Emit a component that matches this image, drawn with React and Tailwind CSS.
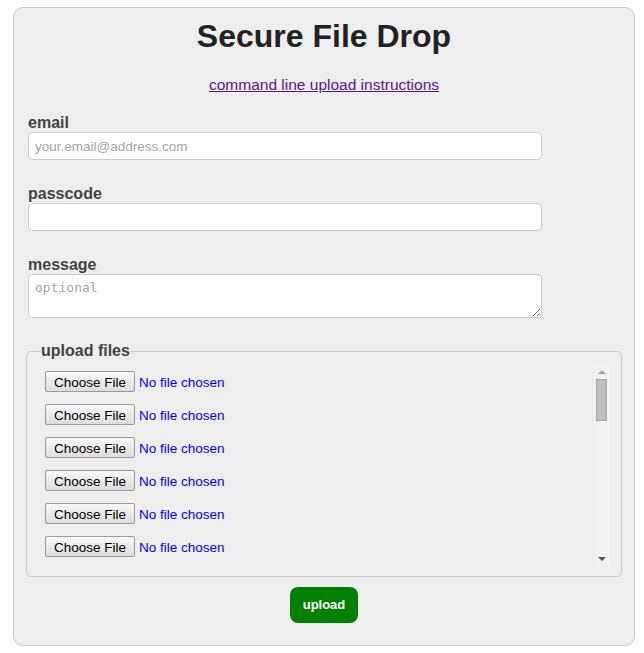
import React from 'react';

const fileSlots = Array.from({ length: 25 }, (_, i) => i);

function FileRow({ index }) {
  return (
    <div className="h-[21px] flex items-center pl-[5px]">
      <input
        type="file"
        name={`file${index}`}
        className="block h-[21px] text-[13.5px] leading-[21px] text-[#0000ff] file:mr-[4px] file:h-[21px] file:px-[8px] file:border file:border-[#9a9a9a] file:rounded-[2px] file:bg-linear-to-b file:from-[#f8f8f8] file:to-[#dddddd] file:text-black"
      />
    </div>
  );
}

// classic scrollbar look, drawn next to the scroll list
function ScrollBar() {
  return (
    <div className="w-[15px] shrink-0 bg-[#f1f1f1] flex flex-col">
      <div className="h-[14px] flex items-center justify-center">
        <div className="w-0 h-0 border-x-[4px] border-x-transparent border-b-[4px] border-b-[#a3a3a3]" />
      </div>
      <div className="mx-[2px] h-[42px] bg-[#bdbdbd] border border-[#a9a9a9]" />
      <div className="flex-1" />
      <div className="h-[14px] flex items-center justify-center">
        <div className="w-0 h-0 border-x-[4px] border-x-transparent border-t-[4px] border-t-[#505050]" />
      </div>
    </div>
  );
}

function App() {
  return (
    <div className="min-h-[653px] bg-white font-['Liberation_Sans',Arial,sans-serif] pt-[7px]">
      <form className="ml-[13px] w-[622px] border border-[#cccccc] rounded-[10px] bg-[#eeeeee] px-[12px] pt-[10px] pb-[22px]">
        {/* Heading */}
        <h1 className="text-center text-[32px] leading-[37px] font-bold text-[#222222]">
          Secure File Drop
        </h1>
        <p className="mt-[21px] text-center text-[15.5px] leading-[18px]">
          <a href="#cli" className="underline text-[#551a8b]">
            command line upload instructions
          </a>
        </p>

        {/* Fields */}
        <div className="pl-[2px]">
          <label className="block mt-[20px] text-[16px] leading-[18px] font-bold text-[#444444]">
            email
          </label>
          <input
            type="email"
            placeholder="your.email@address.com"
            className="block w-[514px] h-[28px] px-[6px] bg-white border border-[#cccccc] rounded-[5px] text-[13.5px] placeholder:text-[#a6a6a6] outline-none"
          />

          <label className="block mt-[25px] text-[16px] leading-[18px] font-bold text-[#444444]">
            passcode
          </label>
          <input
            type="password"
            className="block w-[514px] h-[28px] px-[6px] bg-white border border-[#cccccc] rounded-[5px] text-[13.5px] outline-none"
          />

          <label className="block mt-[25px] text-[16px] leading-[18px] font-bold text-[#444444]">
            message
          </label>
          <textarea
            placeholder="optional"
            className="block w-[514px] h-[44px] px-[6px] py-[5px] bg-white border border-[#cccccc] rounded-[5px] font-['DejaVu_Sans_Mono',monospace] text-[13px] leading-[15px] placeholder:text-[#a6a6a6] resize outline-none"
          />
        </div>

        {/* Files */}
        <fieldset className="mt-[24px] border border-[#cccccc] rounded-[5px] pl-[13px] pr-[12px] pt-[5px] pb-[10px]">
          <legend className="px-[1px] text-[16px] leading-[18px] font-bold text-[#444444]">
            upload files
          </legend>
          <div className="h-[201px] flex">
            <div className="flex-1 overflow-y-scroll [scrollbar-width:none]">
              <div className="flex flex-col gap-[12px] py-[6px]">
                {fileSlots.map((i) => (
                  <FileRow key={i} index={i} />
                ))}
              </div>
            </div>
            <ScrollBar />
          </div>
        </fieldset>

        <button
          type="submit"
          className="block mx-auto mt-[10px] w-[68px] h-[36px] rounded-[8px] bg-[#008000] text-white text-[13px] font-bold"
        >
          upload
        </button>
      </form>
    </div>
  );
}

export default App;
